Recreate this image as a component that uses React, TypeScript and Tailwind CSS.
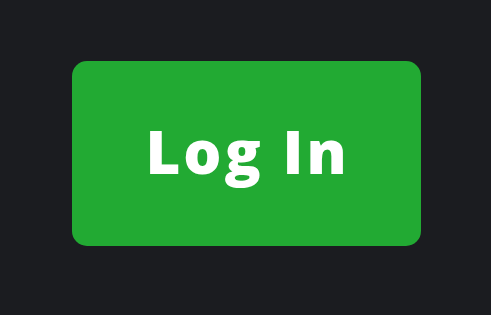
export default function App() {
  return (
    <div className="flex min-h-screen w-full justify-center bg-[#1b1c20] pt-[61px]">
      <button
        type="button"
        className="ml-[1px] flex h-[185px] w-[349px] items-center justify-center rounded-[15px] bg-[#22aa33] pb-[5px] pl-[3px] text-[60px] font-extrabold tracking-[0.05em] text-white"
        style={{ fontFamily: "'Open Sans', sans-serif" }}
      >
        Log In
      </button>
    </div>
  );
}
